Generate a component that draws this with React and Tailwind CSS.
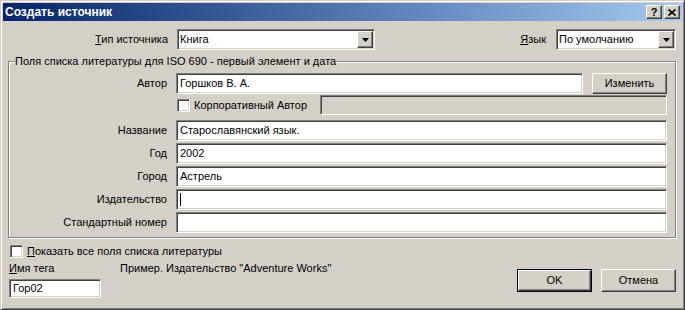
import React from 'react';

const sunken =
  'border border-t-[#808080] border-l-[#808080] border-b-white border-r-white shadow-[inset_1px_1px_0_#404040,inset_-1px_-1px_0_#d4d0c8]';
const raised =
  'border border-t-white border-l-white border-b-[#404040] border-r-[#404040] shadow-[inset_-1px_-1px_0_#808080,inset_1px_1px_0_#d4d0c8]';

const TextBox = ({ value, className = '', caret }) => (
  <div className={`${sunken} bg-white h-[21px] flex items-center pl-[3px] ${className}`}>
    {caret && <span className="w-px h-[13px] bg-black" />}
    {value}
  </div>
);

const CheckBox = () => <div className={`${sunken} bg-white w-[13px] h-[13px] shrink-0`} />;

const Combo = ({ value, className = '' }) => (
  <div className={`${sunken} bg-white h-[21px] flex items-center pl-[2px] pr-[1px] ${className}`}>
    <span className="flex-1">{value}</span>
    <div className={`${raised} bg-[#d4d0c8] w-[16px] h-[17px] flex items-center justify-center`}>
      <svg width="7" height="4" viewBox="0 0 7 4">
        <path d="M0 0h7L3.5 4z" fill="#000" />
      </svg>
    </div>
  </div>
);

const Button = ({ children, isDefault, className = '' }) =>
  isDefault ? (
    <div className={`border border-black ${className}`}>
      <div className={`${raised} bg-[#d4d0c8] w-full h-full flex items-center justify-center`}>{children}</div>
    </div>
  ) : (
    <div className={`${raised} bg-[#d4d0c8] flex items-center justify-center ${className}`}>{children}</div>
  );

const Row = ({ label, children, className = '' }) => (
  <div className={`flex items-center ${className}`}>
    <div className="w-[158px] text-right">{label}</div>
    <div className="ml-[9px] flex items-center">{children}</div>
  </div>
);

export default function App() {
  return (
    <div className="w-[685px] h-[310px] bg-[#d4d0c8] border border-t-[#d4d0c8] border-l-[#d4d0c8] border-r-[#404040] border-b-[#404040] shadow-[inset_1px_1px_0_white,inset_-1px_-1px_0_#808080] p-[2px] font-['Liberation_Sans',sans-serif] text-[11px] text-black leading-[13px] overflow-hidden">
      {/* title bar */}
      <div className="h-[18px] bg-linear-to-r from-[#0a246a] to-[#a6caf0] flex items-center pl-[2px] pr-[2px]">
        <span className="text-white font-bold text-[12px] flex-1">Создать источник</span>
        <div className={`${raised} bg-[#d4d0c8] w-[16px] h-[14px] flex items-center justify-center font-bold text-[11px] leading-none`}>
          ?
        </div>
        <div className={`${raised} bg-[#d4d0c8] w-[16px] h-[14px] flex items-center justify-center ml-[2px]`}>
          <svg width="8" height="7" viewBox="0 0 8 7">
            <path d="M0.5 0.5L7.5 6.5M7.5 0.5L0.5 6.5" stroke="#000" strokeWidth="1.6" />
          </svg>
        </div>
      </div>

      {/* source type / language */}
      <div className="flex items-center mt-[8px] pr-[6px]">
        <div className="w-[165px] text-right">
          <u>Т</u>ип источника
        </div>
        <Combo value="Книга" className="ml-[9px] w-[198px]" />
        <div className="ml-auto">
          <u>Я</u>зык
        </div>
        <Combo value="По умолчанию" className="ml-[10px] w-[120px]" />
      </div>

      {/* bibliography fields */}
      <fieldset className="ml-[5px] mt-[5px] w-[668px] border border-[#808080] shadow-[inset_1px_1px_0_white,1px_1px_0_white] pr-[7px] pb-[4px]">
        <legend className="ml-[6px] bg-[#d4d0c8] leading-[13px]">
          Поля списка литературы для ISO 690 - первый элемент и дата
        </legend>
        <Row label="Автор" className="mt-[5px]">
          <TextBox value="Горшков В. А." className="w-[407px]" />
          <Button className="ml-[9px] w-[75px] h-[21px]">Изменить</Button>
        </Row>
        <Row label="" className="mt-px">
          <div className="flex items-center w-[491px]">
            <div className="ml-px">
              <CheckBox />
            </div>
            <span className="ml-[4px]">Корпоративный Автор</span>
            <div className={`${sunken} bg-[#d4d0c8] h-[20px] flex-1 ml-[13px]`} />
          </div>
        </Row>
        <Row label="Название" className="mt-[5px]">
          <TextBox value="Старославянский язык." className="w-[491px]" />
        </Row>
        <Row label="Год" className="mt-[2px]">
          <TextBox value="2002" className="w-[491px]" />
        </Row>
        <Row label="Город" className="mt-[2px]">
          <TextBox value="Астрель" className="w-[491px]" />
        </Row>
        <Row label="Издательство" className="mt-[2px]">
          <TextBox caret className="w-[491px]" />
        </Row>
        <Row label="Стандартный номер" className="mt-[2px]">
          <TextBox className="w-[491px]" />
        </Row>
      </fieldset>

      {/* show all fields */}
      <div className="flex items-center mt-[7px] ml-[7px]">
        <CheckBox />
        <span className="ml-[4px]">
          <u>П</u>оказать все поля списка литературы
        </span>
      </div>

      {/* tag name / buttons */}
      <div className="flex items-start mt-[4px] pr-[6px]">
        <div className="ml-[6px] w-[92px] flex flex-col">
          <span>
            <u>И</u>мя тега
          </span>
          <div className={`${sunken} bg-white h-[19px] mt-[4px] flex items-center pl-[3px]`}>Гор02</div>
        </div>
        <span className="ml-[19px]">Пример. Издательство "Adventure Works"</span>
        <div className="ml-auto flex gap-[9px] mt-[7px]">
          <Button isDefault className="w-[75px] h-[23px]">
            OK
          </Button>
          <Button className="w-[75px] h-[23px]">Отмена</Button>
        </div>
      </div>
    </div>
  );
}
